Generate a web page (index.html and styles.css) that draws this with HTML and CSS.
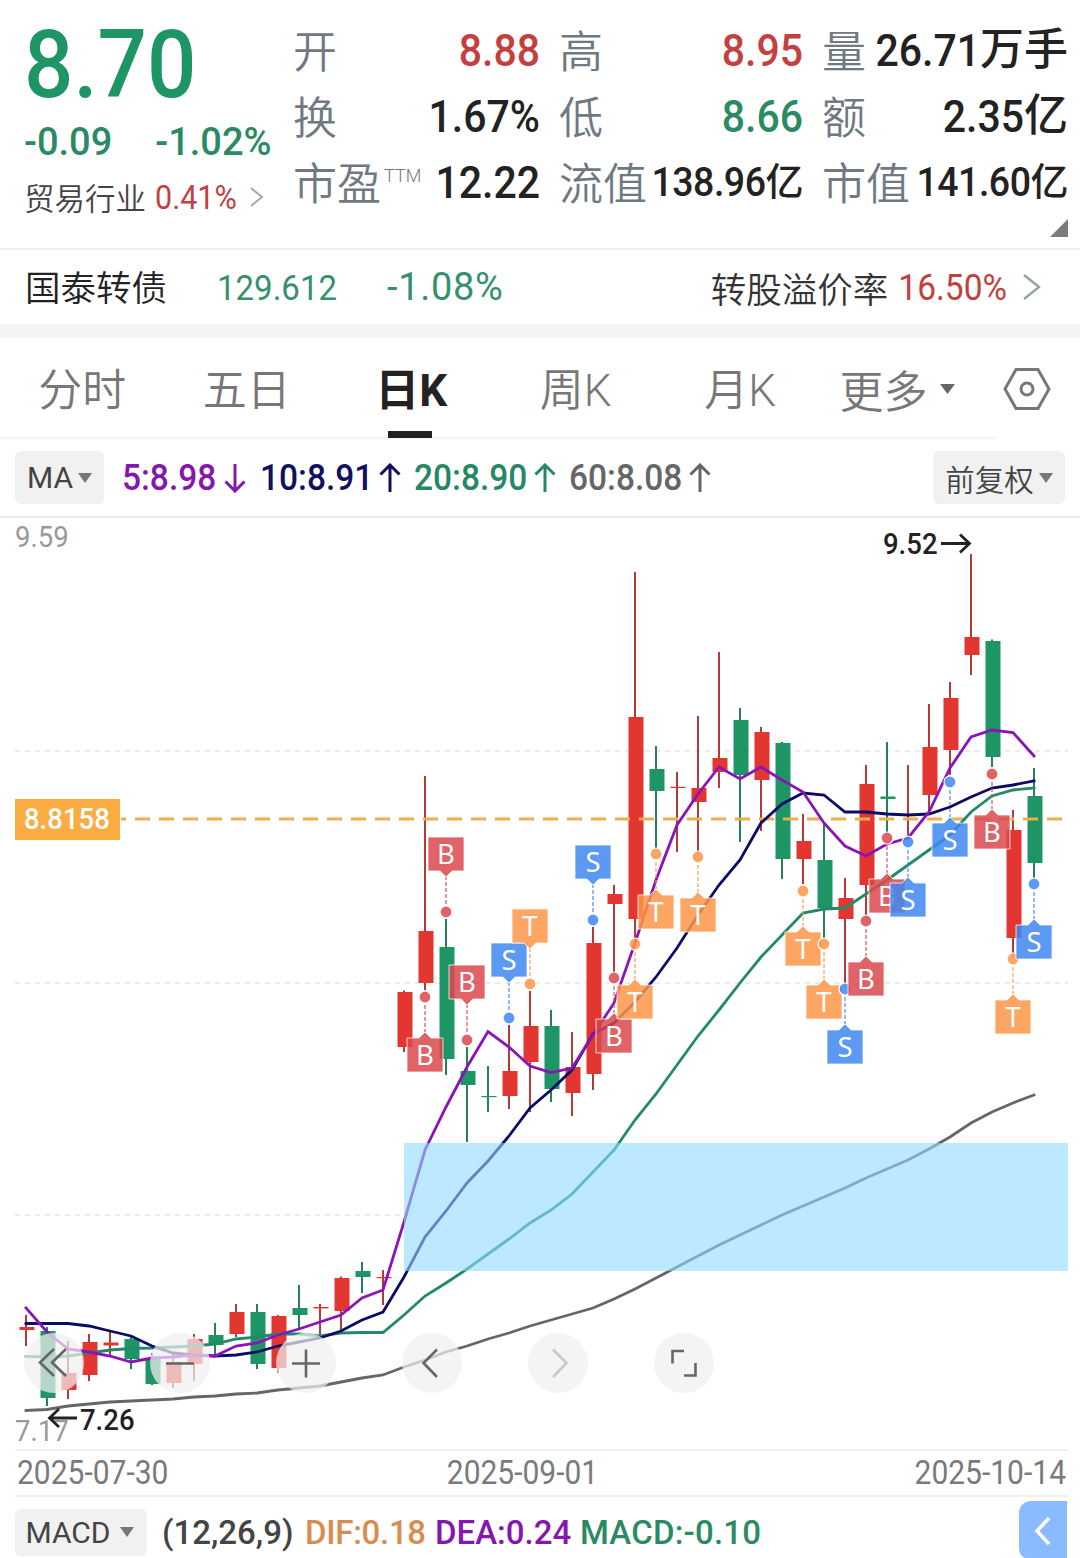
FILE: index.html
```html
<!DOCTYPE html>
<html lang="zh">
<head>
  <meta charset="UTF-8">
  <meta name="viewport" content="width=device-width, initial-scale=1.0">
  <title>日K行情</title>
  <link rel="stylesheet" href="styles.css">
</head>
<body>
  <div class="quote">
    <div class="price-box">
      <div class="price num">8.70</div>
      <div class="change"><span>-0.09</span><span>-1.02%</span></div>
      <div class="industry">
        贸易行业<span class="rate num">0.41%</span>
        <svg width="16" height="24" viewBox="0 0 16 24"><path d="M2 3l11 9-11 9" fill="none" stroke="#a3a8ad" stroke-width="2"/></svg>
      </div>
    </div>
    <div class="stats">
      <div class="stat"><label>开</label><b class="red"><i class="num">8.88</i></b></div>
      <div class="stat"><label>高</label><b class="red"><i class="num">8.95</i></b></div>
      <div class="stat"><label>量</label><b><i class="num">26.71</i>万手</b></div>
      <div class="stat"><label>换</label><b><i class="num">1.67%</i></b></div>
      <div class="stat"><label>低</label><b class="green"><i class="num">8.66</i></b></div>
      <div class="stat"><label>额</label><b><i class="num">2.35</i>亿</b></div>
      <div class="stat"><label>市盈<sup>TTM</sup></label><b><i class="num">12.22</i></b></div>
      <div class="stat"><label>流值</label><b class="small"><i class="num">138.96</i>亿</b></div>
      <div class="stat"><label>市值</label><b class="small"><i class="num">141.60</i>亿</b></div>
    </div>
    <div class="corner"></div>
  </div>

  <div class="bond">
    <span class="bond-name">国泰转债</span>
    <span class="bond-price num">129.612</span>
    <span class="bond-change">-1.08%</span>
    <span class="premium">转股溢价率</span>
    <span class="premium-rate num">16.50%</span>
    <svg width="20" height="30" viewBox="0 0 20 30"><path d="M2 3l15 12L2 27" fill="none" stroke="#98a2aa" stroke-width="2.4"/></svg>
  </div>

  <div class="tabs">
    <div class="tab">分时</div>
    <div class="tab">五日</div>
    <div class="tab active">日K</div>
    <div class="tab">周K</div>
    <div class="tab">月K</div>
    <div class="more">更多<svg width="16" height="12" viewBox="0 0 16 12"><path d="M0 1h15l-7.500 10z" fill="#666"/></svg></div>
    <svg class="setting" width="50" height="44" viewBox="0 0 50 44" fill="none" stroke="#777" stroke-width="3">
      <path d="M3 22L14 2.500h22L47 22 36 41.500H14z"/><circle cx="25" cy="22" r="6"/>
    </svg>
  </div>

  <div class="ma-bar">
    <div class="pill">MA<i class="caret"></i></div>
    <div class="ma ma5"><span class="num">5:8.98</span><svg viewBox="0 0 22 30"><path d="M11 1v27M1.500 18.500L11 28l9.500-9.500"/></svg></div>
    <div class="ma ma10"><span class="num">10:8.91</span><svg viewBox="0 0 22 30"><path d="M11 29V2M1.500 11.500L11 2l9.500 9.500"/></svg></div>
    <div class="ma ma20"><span class="num">20:8.90</span><svg viewBox="0 0 22 30"><path d="M11 29V2M1.500 11.500L11 2l9.500 9.500"/></svg></div>
    <div class="ma ma60"><span class="num">60:8.08</span><svg viewBox="0 0 22 30"><path d="M11 29V2M1.500 11.500L11 2l9.500 9.500"/></svg></div>
    <div class="pill fq">前复权<i class="caret"></i></div>
  </div>

  <div class="chart">
    <svg id="kline" width="1080" height="931" viewBox="0 518 1080 931"></svg>
    <div class="tools">
      <svg viewBox="0 0 60 60"><path d="M30 16L16 29.500 30 43M42 16L28 29.500 42 43"/></svg>
      <svg viewBox="0 0 60 60"><path d="M16 30.500h28"/></svg>
      <svg viewBox="0 0 60 60"><path d="M16 30.500h28M30 16.500v28"/></svg>
      <svg viewBox="0 0 60 60"><path d="M35 16.500L21.500 30 35 44"/></svg>
      <svg viewBox="0 0 60 60" class="off"><path d="M25 16.500L38.500 30 25 44"/></svg>
      <svg viewBox="0 0 60 60"><path d="M30 18H18.500v12.500M30 42.500h11.500V30"/></svg>
    </div>
  </div>

  <div class="dates"><span class="num">2025-07-30</span><span class="num mid">2025-09-01</span><span class="num">2025-10-14</span></div>

  <div class="macd-bar">
    <div class="pill">MACD<i class="caret"></i></div>
    <span class="param">(12,26,9)</span>
    <span class="dif">DIF:0.18</span>
    <span class="dea">DEA:0.24</span>
    <span class="macd">MACD:-0.10</span>
    <div class="drawer"><svg width="20" height="32" viewBox="0 0 20 32"><path d="M16 3L4 16l12 13" fill="none" stroke="#fff" stroke-width="3.500"/></svg></div>
  </div>

  <script src="chart.js"></script>
</body>
</html>
```
FILE: styles.css
```css
body {
  margin: 0;
  width: 1080px;
  height: 1558px;
  overflow: hidden;
  background: #fff;
  color: #222;
  font-family: Roboto, "Noto Sans CJK SC", sans-serif;
}
* {
  box-sizing: border-box;
}
i {
  font-style: normal;
}
svg {
  display: block;
  flex: none;
}
/* tall, narrow figures */
.num {
  display: inline-block;
  transform: scaleY(1.09);
}
.red {
  color: #c4403f;
}
.green {
  color: #2b8a63;
}

/* quote header */
.quote {
  position: relative;
  display: flex;
  height: 250px;
  border-bottom: 2px solid #f1f1f1;
}
.price-box {
  width: 293px;
  padding: 17px 0 0 24px;
  white-space: nowrap;
}
.price {
  height: 94px;
  line-height: 94px;
  font-size: 87px;
  font-weight: 500;
  color: #1d9564;
}
.change {
  display: flex;
  gap: 43px;
  margin-top: 8px;
  line-height: 46px;
  font-size: 38px;
  font-weight: 500;
  color: #2b8a63;
}
.industry {
  display: flex;
  align-items: center;
  height: 44px;
  margin-top: 10px;
  font-size: 30.5px;
  font-weight: 350;
  color: #444;
}
.rate {
  margin: 0 12px 0 9px;
  font-weight: 400;
  color: #c0413f;
}
.stats {
  display: grid;
  grid-template-columns: 247px 244px 246px;
  grid-auto-rows: 66px;
  column-gap: 19px;
  padding-top: 17px;
}
.stat {
  display: flex;
  justify-content: space-between;
  align-items: center;
  white-space: nowrap;
}
.stat label {
  position: relative;
  padding-top: 7px;
  font-size: 44px;
  font-weight: 350;
  line-height: 59px;
  color: #6f7982;
}
.stat sup {
  position: absolute;
  left: 91px;
  top: 17px;
  font-size: 18px;
  line-height: 20px;
}
.stat b {
  font-size: 44px;
  font-weight: 500;
  line-height: 66px;
}
.stat b .num {
  font-size: 41px;
}
.stat b.small {
  font-size: 38px;
  letter-spacing: -.5px;
}
.stat b.small .num {
  font-size: 37.5px;
}
.corner {
  position: absolute;
  right: 12px;
  bottom: 11px;
  border-left: 18px solid transparent;
  border-bottom: 18px solid #7b7b7b;
}

/* convertible bond row */
.bond {
  display: flex;
  align-items: center;
  height: 88px;
  padding: 0 38px 14px 25px;
  background: linear-gradient(#fff 74px, #f4f4f4 74px);
  font-size: 35.5px;
  font-weight: 350;
  color: #222;
}
.bond-name {
  width: 192px;
  padding-bottom: 3px;
}
.bond-price {
  width: 170px;
  font-size: 33px;
  font-weight: 400;
  color: #35916c;
}
.bond-change {
  font-size: 38px;
  font-weight: 400;
  letter-spacing: .7px;
  color: #35916c;
}
.premium {
  margin-left: auto;
  color: #333;
}
.premium-rate {
  margin: 0 15px 0 10px;
  font-size: 33.5px;
  font-weight: 400;
  color: #c0413f;
}

/* period tabs */
.tabs {
  display: flex;
  align-items: center;
  height: 101px;
  font-size: 44px;
  font-weight: 350;
  color: #777;
  background: linear-gradient(#f4f4f4, #f4f4f4) 0 100% / 996px 2px no-repeat;
}
.tab {
  display: flex;
  justify-content: center;
  width: 164.5px;
  height: 101px;
  line-height: 106px;
}
.tab.active {
  font-weight: 700;
  color: #222;
  background: linear-gradient(#222, #222) 59px 93px / 44px 7px no-repeat;
}
.more {
  display: flex;
  align-items: center;
  gap: 12px;
  width: 179px;
  padding-left: 17px;
}

/* MA legend */
.ma-bar {
  display: flex;
  align-items: center;
  height: 79px;
  padding: 0 15px;
  border-bottom: 2px solid #ebebeb;
}
.pill {
  display: flex;
  align-items: center;
  justify-content: center;
  gap: 5px;
  width: 89px;
  height: 53px;
  border-radius: 6px;
  background: #f1f1f1;
  font-size: 30px;
  color: #444;
}
.pill.fq {
  width: 132px;
  margin-left: auto;
  font-size: 29.5px;
  font-weight: 350;
}
.caret {
  border: 7px solid transparent;
  border-top: 10px solid #777;
  border-bottom: 0;
}
.ma {
  display: flex;
  align-items: center;
  justify-content: space-between;
  font-size: 33.5px;
  font-weight: 500;
}
.ma svg {
  width: 22px;
  height: 30px;
  fill: none;
  stroke: currentColor;
  stroke-width: 3;
}
.ma5 {
  width: 124px;
  margin-left: 18px;
  color: #8517ae;
}
.ma10 {
  width: 141px;
  margin-left: 14px;
  color: #10105f;
}
.ma20 {
  width: 142px;
  margin-left: 13px;
  color: #258765;
}
.ma60 {
  width: 142px;
  margin-left: 13px;
  color: #666;
}

/* k-line */
.chart {
  position: relative;
  height: 931px;
}
.tools {
  position: absolute;
  left: 24px;
  top: 815px;
  display: flex;
  gap: 66px;
}
.tools svg {
  width: 60px;
  height: 60px;
  border-radius: 50%;
  background: rgba(240, 240, 240, .72);
  fill: none;
  stroke: #666;
  stroke-width: 2.6;
}
.tools .off {
  stroke: #c8c8c8;
}
.dates {
  display: flex;
  justify-content: space-between;
  height: 48px;
  margin: 0 12px 0 15px;
  padding: 0 2px;
  border-top: 2px solid #f0f0f0;
  border-bottom: 2px solid #f0f0f0;
  line-height: 43px;
  font-size: 30px;
  color: #7a7a7a;
}
.dates .mid {
  margin-right: 38px;
}

/* MACD */
.macd-bar {
  position: relative;
  display: flex;
  align-items: center;
  height: 61px;
  padding: 9px 0 0 15px;
  white-space: nowrap;
  font-size: 33px;
  font-weight: 500;
}
.macd-bar .pill {
  width: 132px;
  height: 47px;
  gap: 9px;
  padding-right: 3px;
  font-weight: 400;
}
.param {
  width: 143px;
  margin-left: 15px;
  color: #444;
}
.dif {
  width: 130px;
  letter-spacing: -.3px;
  color: #d98c50;
}
.dea {
  width: 145px;
  color: #8517ae;
}
.macd {
  letter-spacing: .2px;
  color: #2b8a63;
}
.drawer {
  position: absolute;
  left: 1019px;
  top: 4px;
  display: flex;
  align-items: center;
  justify-content: center;
  width: 48px;
  height: 59px;
  border-radius: 12px 0 0 12px;
  background: #8abaff;
}
```
FILE: chart.js
```js
const RED = '#e43631', GREEN = '#1d9564';
const X0 = 26, STEP = 21;

// [up, high, bodyTop, bodyBottom, low]
const candles = [
  [1, 1315, 1327, 1330, 1346], [0, 1327, 1331, 1398, 1406], [1, 1341, 1373, 1390, 1399],
  [1, 1334, 1342, 1375, 1381], [1, 1332, 1342.5, 1345.5, 1355], [0, 1336, 1339, 1359, 1369],
  [0, 1353, 1358, 1384, 1385], [1, 1353, 1362, 1383, 1388], [1, 1334, 1339, 1364, 1381],
  [0, 1323, 1335, 1345, 1357], [1, 1304, 1312, 1334, 1337], [0, 1304, 1312, 1364, 1369],
  [1, 1315, 1316, 1368, 1373], [0, 1285, 1308, 1315, 1329], [1, 1304, 1307, 1308.4, 1337],
  [1, 1276.5, 1278, 1311, 1330], [0, 1262, 1271, 1277, 1293], [1, 1270, 1277, 1278.2, 1305],
  [1, 990.5, 992, 1047, 1052], [1, 776, 931, 983, 990], [0, 919, 947, 1059, 1075],
  [0, 1047, 1071, 1085, 1142], [0, 1066, 1096, 1097.2, 1112], [1, 1025, 1071, 1096, 1109],
  [1, 991, 1026, 1062, 1112], [0, 1010, 1026, 1089, 1102], [1, 1032, 1067, 1093, 1116],
  [1, 927, 943, 1074, 1090], [1, 885, 894, 904, 973], [1, 572, 717, 919, 938],
  [0, 746, 769, 791, 848], [1, 772, 786.8, 788, 852], [1, 716, 788, 802, 853],
  [1, 652, 758, 772, 788], [0, 708, 720, 775, 842], [1, 727, 732, 780, 831],
  [0, 742, 743, 859, 879], [1, 814, 841, 859, 884], [0, 822, 860, 908, 938],
  [1, 878, 898, 919, 983], [1, 765, 784, 885, 915], [0, 742, 796.5, 799, 833],
  [1, 765, 836, 836, 837], [1, 704, 747, 795, 815], [1, 682, 698, 750, 775],
  [1, 554, 637, 655, 675], [0, 639.5, 641, 757, 767], [1, 810, 830, 938, 955],
  [0, 768, 796, 863, 878]
];

const ma5 = [1308, 1332, 1349, 1352, 1356, 1362, 1358, 1357, 1355, 1356, 1346, 1343, 1335, 1329, 1322, 1315, 1298, 1290,
  1222, 1150, 1107, 1067, 1031.5, 1047, 1066, 1072.5, 1068, 1035, 1003, 943, 880, 825, 794, 767, 779, 767, 780, 792,
  823, 846, 856, 844, 838, 812, 768, 737, 730, 732.5, 756];
const ma10 = [1323.5, 1323.5, 1323.5, 1326, 1331, 1336, 1346, 1353, 1355, 1356, 1355, 1352, 1346, 1342, 1338, 1331, 1320, 1312,
  1277, 1237, 1211, 1183, 1161, 1136, 1108, 1090, 1070, 1034, 1023, 1002, 977, 948, 915, 885, 860, 823, 804, 793,
  795, 812, 812, 814, 815, 814, 807, 797, 788, 785, 781];
const ma20 = [1356.5, 1357, 1356, 1353, 1350, 1348.5, 1348, 1347, 1346, 1344, 1339, 1337, 1334, 1334, 1336, 1333, 1332.5, 1332.5,
  1315, 1296, 1283, 1269, 1254, 1239, 1223, 1210, 1194, 1172, 1150, 1120, 1094, 1065, 1036, 1010, 983, 957, 935, 913,
  909, 908, 894, 880, 865, 850, 835, 812, 796, 790, 788];
const ma60 = [1410.5, 1409.5, 1406, 1404, 1402, 1401, 1400, 1399, 1397, 1396, 1394, 1393, 1390, 1388, 1386, 1382, 1378, 1375,
  1367, 1360, 1352, 1346, 1339, 1333, 1326, 1320, 1314, 1308, 1299, 1289, 1278, 1267, 1256, 1245, 1235, 1225, 1215, 1206,
  1197, 1188, 1178, 1169, 1160, 1149, 1137, 1123, 1112, 1103, 1095];

// [index, type, dotY, label side: 1 below, -1 above]
const marks = [
  [19, 'B', 997, 1], [20, 'B', 912, -1], [21, 'B', 1040, -1], [23, 'S', 1018, -1], [24, 'T', 984, -1],
  [27, 'S', 920, -1], [28, 'B', 978, 1], [29, 'T', 944, 1], [30, 'T', 854, 1], [32, 'T', 857, 1],
  [37, 'T', 891, 1], [38, 'T', 944, 1], [39, 'S', 989, 1], [40, 'B', 921, 1], [41, 'B', 838, 1],
  [42, 'S', 842, 1], [44, 'S', 782, 1], [46, 'B', 774, 1], [47, 'T', 959, 1], [48, 'S', 884, 1]
];
const markColor = { B: '#da484d', S: '#3f87f0', T: '#fd9748' };

const x = i => X0 + STEP * i;
const label = (lx, ly, text, color, weight) =>
  `<text transform="translate(${lx} ${ly}) scale(1 1.09)" font-size="27.5" font-weight="${weight}" fill="${color}">${text}</text>`;
let out = '';

out += '<path d="M15 751H1068M15 983H1068M15 1215H404" stroke="#ebebeb" stroke-width="2" stroke-dasharray="5 5"/>';

out += label(15, 547, '9.59', '#999', 400) + label(15, 1441, '7.17', '#999', 400);

candles.forEach(([up, hi, top, bottom, lo], i) => {
  const c = up ? RED : GREEN;
  out += `<path d="M${x(i)} ${hi}V${lo}" stroke="${up ? '#b33a37' : '#25815b'}" stroke-width="2"/>`;
  out += `<rect x="${x(i) - 6.5}" y="${top}" width="15" height="${bottom - top}" fill="${c}"/>`;
});

out += '<path d="M121 819H1063" stroke="#f0ad4c" stroke-width="3" stroke-dasharray="15 9" stroke-dashoffset="10"/>';

[[ma60, '#666'], [ma20, '#24896a'], [ma10, '#0b0b66'], [ma5, '#8a14b8']].forEach(([ma, color]) => {
  const pts = ma.map((y, i) => x(i) + ',' + y).join(' ');
  out += `<polyline points="${pts}" fill="none" stroke="${color}" stroke-width="2.8" stroke-linecap="square"/>`;
});

// gap zone
out += '<rect x="404" y="1143" width="664" height="128" fill="#90dbff" fill-opacity=".6"/>';

marks.forEach(([i, type, y, side]) => {
  const cx = x(i), c = markColor[type], tip = y + 35 * side, edge = y + 41 * side, end = y + 75 * side;
  out += `<path d="M${cx} ${y + 8 * side}V${tip}" stroke="${c}" stroke-opacity=".7" stroke-width="1.6" stroke-dasharray="4 2"/>`;
  out += `<circle cx="${cx}" cy="${y}" r="6" fill="${c}" fill-opacity=".85" stroke="#fff" stroke-width="1.2"/>`;
  out += `<path d="M${cx} ${tip}l6 ${6 * side}H${cx + 18}V${end}H${cx - 18}V${edge}H${cx - 6}z" fill="${c}" fill-opacity=".85" stroke="#fff" stroke-opacity=".75" stroke-width="1"/>`;
  out += `<text x="${cx}" y="${(edge + end) / 2 + 10}" font-family="Noto Sans" font-size="27.5" text-anchor="middle" fill="#fff">${type}</text>`;
});

out += '<rect x="15" y="799" width="105" height="41" fill="#fbad43"/>';
out += label(24, 829, '8.8158', '#fff', 500);
out += label(883, 554, '9.52', '#222', 500) + label(80, 1430, '7.26', '#222', 500);
out += '<path d="M941 543.500h28m-9-9l9.500 9-9.500 9M77 1418H50m9-9l-9.500 9 9.500 9" fill="none" stroke="#222" stroke-width="2.800"/>';

document.getElementById('kline').innerHTML = out;
```
